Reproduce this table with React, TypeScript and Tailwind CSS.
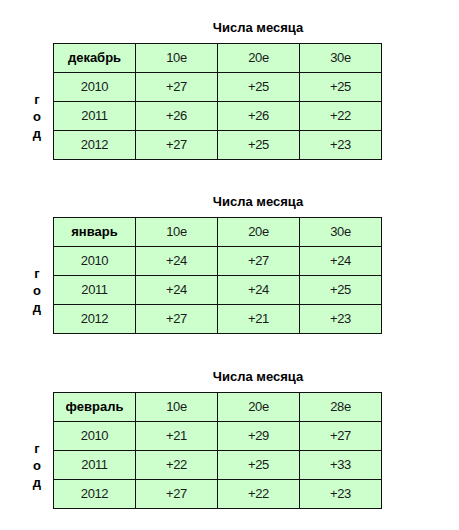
import { Fragment } from "react";

const months = [
  {
    name: "декабрь",
    days: ["10е", "20е", "30е"],
    rows: [
      { year: "2010", vals: ["+27", "+25", "+25"] },
      { year: "2011", vals: ["+26", "+26", "+22"] },
      { year: "2012", vals: ["+27", "+25", "+23"] },
    ],
  },
  {
    name: "январь",
    days: ["10е", "20е", "30е"],
    rows: [
      { year: "2010", vals: ["+24", "+27", "+24"] },
      { year: "2011", vals: ["+24", "+24", "+25"] },
      { year: "2012", vals: ["+27", "+21", "+23"] },
    ],
  },
  {
    name: "февраль",
    days: ["10е", "20е", "28е"],
    rows: [
      { year: "2010", vals: ["+21", "+29", "+27"] },
      { year: "2011", vals: ["+22", "+25", "+33"] },
      { year: "2012", vals: ["+27", "+22", "+23"] },
    ],
  },
];

function Cell({ children, bold }: { children: React.ReactNode; bold?: boolean }) {
  return (
    <div
      className={`flex h-[28px] items-center justify-center bg-[#ccffcc] text-[13px] ${
        bold ? "font-bold text-black" : "tracking-[-0.4px] text-[#1a1a1a]"
      }`}
    >
      {children}
    </div>
  );
}

function MonthTable({ month }: { month: (typeof months)[number] }) {
  return (
    <section className="pt-[20px] last:pt-[21px]">
      <div className="ml-[135px] w-[246px] text-center text-[13px] font-bold leading-[16px] text-black">
        Числа месяца
      </div>
      <div className="mt-[7px] flex">
        <div className="flex w-[53px] flex-col pl-[30px] pr-[9px] pt-[29px]">
          <div className="flex flex-1 flex-col items-center justify-center text-[13px] font-bold leading-[17px] text-black">
            <span>г</span>
            <span>о</span>
            <span>д</span>
          </div>
        </div>
        <div className="grid grid-cols-[81px_81px_81px_81px] gap-px bg-[#111] p-px">
          <Cell bold>{month.name}</Cell>
          {month.days.map((d) => (
            <Cell key={d}>{d}</Cell>
          ))}
          {month.rows.map((r) => (
            <Fragment key={r.year}>
              <Cell>{r.year}</Cell>
              {r.vals.map((v, i) => (
                <Cell key={i}>{v}</Cell>
              ))}
            </Fragment>
          ))}
        </div>
      </div>
    </section>
  );
}

export default function App() {
  return (
    <div
      className="flex h-[530px] w-[459px] flex-col gap-[14px] bg-white"
      style={{ fontFamily: '"Liberation Sans", Arial, sans-serif' }}
    >
      {months.map((m) => (
        <MonthTable key={m.name} month={m} />
      ))}
    </div>
  );
}
